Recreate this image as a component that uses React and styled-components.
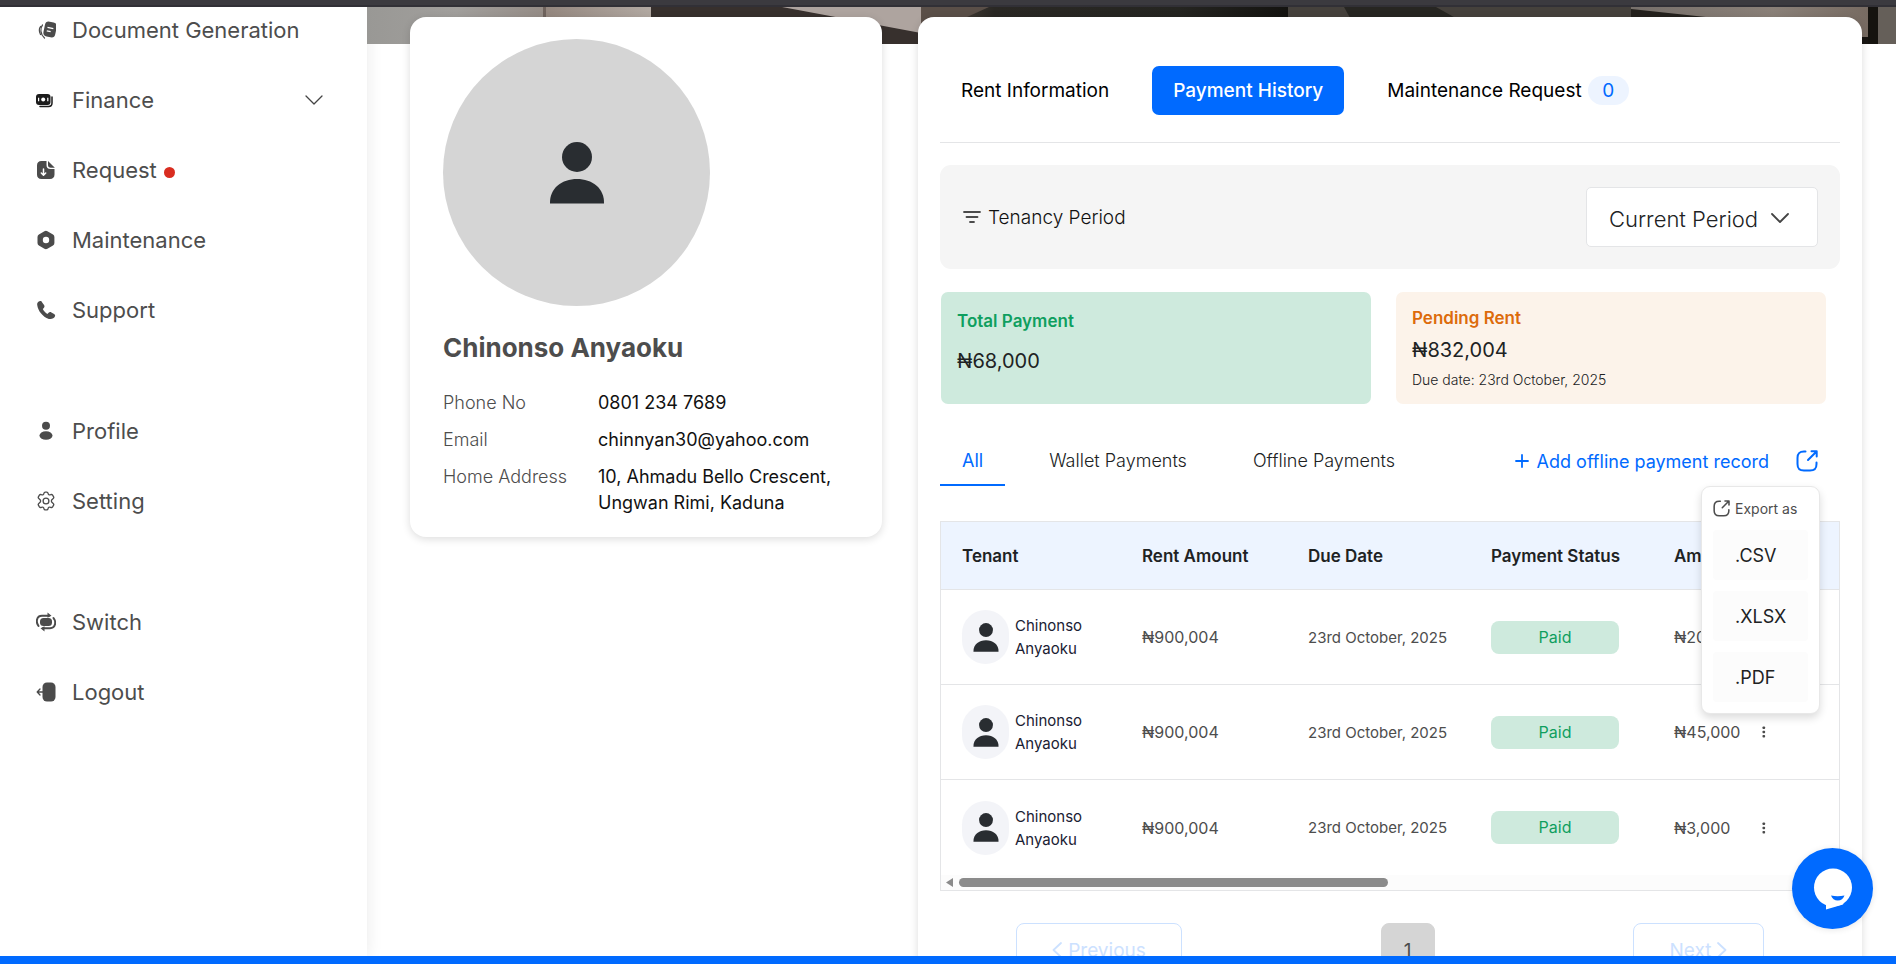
import React, { useState } from 'react';
import styled, { createGlobalStyle } from 'styled-components';

const primaryColor = '#006aff';
const primaryLight = '#edf4ff';
const successColor = '#0f9f5f';
const successLight = '#ceeadd';
const warningColor = '#dd6b0b';
const warningLight = '#fcf3ea';
const darkText = '#202223';
const greyText = '#4d4d4d';
const borderColor = '#e4e5e7';

const GlobalStyle = createGlobalStyle`
  * {
    box-sizing: border-box;
  }

  body {
    margin: 0;
    background: #fff;
    color: ${darkText};
    font-family: Inter, 'Open Sans', sans-serif;
    font-size: 18px;
    overflow: hidden;
  }

  button, select {
    font-family: inherit;
    border: none;
    background: none;
    padding: 0;
    margin: 0;
    color: inherit;
    cursor: pointer;
  }

  h1, p, dl, dd, ul {
    margin: 0;
    padding: 0;
  }

  svg {
    display: block;
    flex: none;
  }
`;

const Page = styled.div`
  display: flex;
  flex-direction: column;
  height: 100vh;
`;

const TopBar = styled.div`
  flex: none;
  height: 7px;
  background: #3b3a3f;
  border-bottom: 2px solid #313036;
`;

const BottomBar = styled.div`
  flex: none;
  height: 8px;
  background: ${primaryColor};
`;

const Body = styled.div`
  display: flex;
  flex: 1;
  min-height: 0;
  overflow: hidden;
`;

const Sidebar = styled.nav`
  display: flex;
  flex-direction: column;
  flex: none;
  gap: 75px;
  width: 367px;
  background: #fff;
  box-shadow: 0 0 16px rgba(0, 0, 0, 0.09);
`;

const NavGroup = styled.ul`
  display: flex;
  flex-direction: column;
  gap: 24px;
  list-style: none;
`;

const NavLink = styled.a`
  display: flex;
  align-items: center;
  height: 46px;
  padding: 0 44px 0 36px;
  color: ${greyText};
  font-size: 22px;
  text-decoration: none;

  > svg:first-child {
    margin-right: 16px;
  }

  > svg:last-child:not(:first-child) {
    margin-left: auto;
  }
`;

const RedDot = styled.span`
  width: 11px;
  height: 11px;
  margin: 4px 0 0 7px;
  border-radius: 50%;
  background: #d92d20;
`;

const Main = styled.main`
  flex: 1;
  min-width: 0;
`;

const BannerArt = styled.svg`
  width: 100%;
  height: 37px;
`;

const Columns = styled.div`
  position: relative;
  display: grid;
  grid-template-columns: 1fr 2fr;
  align-items: start;
  gap: 36px;
  margin-top: -27px;
  padding: 0 34px 0 43px;
`;

const Card = styled.section`
  min-width: 0;
  background: #fff;
  border-radius: 16px;
  box-shadow: 0 2px 8px rgba(0, 0, 0, 0.14);
`;

const ProfileCard = styled(Card)`
  padding: 22px 33px 21px;
`;

const Photo = styled.div`
  display: flex;
  align-items: center;
  justify-content: center;
  width: 267px;
  height: 267px;
  border-radius: 50%;
  background: #d5d5d5;
`;

const Name = styled.h1`
  margin: 24px 0;
  color: ${greyText};
  font-size: 26px;
  line-height: 36px;
  font-weight: 700;
`;

const Details = styled.dl`
  display: grid;
  grid-template-columns: 155px 1fr;
  row-gap: 11px;
  line-height: 26px;

  dt {
    color: ${greyText};
    font-weight: 300;
  }

  dd {
    color: #111;
  }
`;

const Panel = styled(Card)`
  padding: 22px;
`;

const Tabs = styled.div`
  display: flex;
  gap: 22px;
  padding: 27px 0;
  border-bottom: 1px solid ${borderColor};
`;

const Tab = styled.button`
  display: flex;
  align-items: center;
  gap: 6px;
  height: 49px;
  padding: 0 21px;
  border-radius: 7px;
  font-size: 19px;
  white-space: nowrap;
  font-weight: ${(p) => (p.$active ? 500 : 400)};
  background: ${(p) => (p.$active ? primaryColor : 'transparent')};
  color: ${(p) => (p.$active ? '#fff' : '#000')};
`;

const Count = styled.span`
  width: 41px;
  border-radius: 15px;
  background: ${primaryLight};
  color: ${primaryColor};
  line-height: 29px;
`;

const FilterBar = styled.div`
  display: flex;
  align-items: center;
  justify-content: space-between;
  margin-top: 22px;
  padding: 22px;
  border-radius: 11px;
  background: #f5f5f5;
`;

const FilterLabel = styled.label`
  display: flex;
  align-items: center;
  gap: 6px;
  color: #111;
  font-size: 19px;
  font-weight: 300;
`;

const SelectBox = styled.div`
  position: relative;

  svg {
    position: absolute;
    top: 26px;
    right: 29px;
    pointer-events: none;
  }
`;

const PeriodSelect = styled.select`
  width: 232px;
  height: 60px;
  padding: 4px 22px 0;
  border: 1px solid ${borderColor};
  border-radius: 5px;
  background: #fff;
  color: ${darkText};
  font-size: 22px;
  font-weight: 300;
  appearance: none;
`;

const Summary = styled.div`
  display: grid;
  grid-template-columns: 1fr 1fr;
  gap: 25px;
  margin-top: 23px;
  padding: 0 14px 0 1px;
`;

const SummaryCard = styled.div`
  display: flex;
  flex-direction: column;
  gap: ${(p) => (p.$roomy ? 16 : 8)}px;
  height: 112px;
  padding: ${(p) => (p.$roomy ? 17 : 14)}px 16px;
  border-radius: 7px;
  background: ${(p) => p.$background};
  line-height: 24px;
`;

const SummaryTitle = styled.p`
  color: ${(p) => p.$color};
  font-size: 17px;
  font-weight: 600;
`;

const SummaryAmount = styled.p`
  font-size: 20px;
`;

const SummaryNote = styled.p`
  font-size: 14px;
  font-weight: 300;
  line-height: 20px;
`;

const PaymentsBar = styled.div`
  display: flex;
  gap: 22px;
  height: 50px;
  margin-top: 32px;
`;

const PaymentTab = styled.button`
  padding: 0 22px;
  border-bottom: 2px solid ${(p) => (p.$active ? primaryColor : 'transparent')};
  color: ${(p) => (p.$active ? primaryColor : darkText)};
  font-size: 18px;
  font-weight: ${(p) => (p.$active ? 400 : 300)};
  white-space: nowrap;
`;

const AddButton = styled.button`
  display: flex;
  align-items: center;
  gap: 8px;
  margin-left: auto;
  color: ${primaryColor};
  font-size: 18px;
  white-space: nowrap;
`;

const ExportWrap = styled.div`
  position: relative;
  display: flex;
  align-items: center;
  margin: 0 22px 0 5px;
  color: ${primaryColor};
`;

const ExportMenu = styled.div`
  position: absolute;
  top: 100%;
  right: -2px;
  z-index: 2;
  display: flex;
  flex-direction: column;
  gap: 11px;
  width: 119px;
  padding: 11px;
  border: 1px solid #e8e8e8;
  border-radius: 9px;
  background: #fff;
  box-shadow: 0 4px 8px rgba(0, 0, 0, 0.14);
`;

const MenuTitle = styled.div`
  display: flex;
  align-items: center;
  gap: 5px;
  height: 21px;
  color: ${greyText};
  font-size: 14px;
  white-space: nowrap;
`;

const MenuItem = styled.button`
  height: 50px;
  padding-left: 22px;
  border-radius: 4px;
  background: #fcfcfc;
  color: ${darkText};
  font-size: 18px;
  text-align: left;
`;

const TableBox = styled.div`
  margin-top: 35px;
  border: 1px solid ${borderColor};
  overflow: hidden;
`;

const Table = styled.table`
  width: 100%;
  table-layout: fixed;
  border-spacing: 0;
`;

const HeadCell = styled.th`
  width: ${(p) => p.$width};
  height: 68px;
  padding: 0 0 0 21px;
  border-bottom: 1px solid ${borderColor};
  background: ${primaryLight};
  font-size: 17px;
  font-weight: 600;
  text-align: left;
  white-space: nowrap;
`;

const Cell = styled.td`
  height: 95px;
  padding: 0 0 0 21px;
  border-bottom: 1px solid ${borderColor};
  color: ${greyText};
  font-size: 15px;
  white-space: nowrap;

  tr:last-child > & {
    border-bottom: none;
  }
`;

const MoneyCell = styled(Cell)`
  font-size: 16px;
`;

const MoreCell = styled(Cell)`
  padding-left: 10px;
`;

const Tenant = styled.div`
  display: flex;
  align-items: center;
  gap: 6px;
  color: #1a2133;
  line-height: 23px;
  white-space: normal;
`;

const Avatar = styled.div`
  display: flex;
  align-items: center;
  justify-content: center;
  flex: none;
  width: 47px;
  height: 54px;
  border-radius: 24px;
  background: #f3f4f8;
`;

const Status = styled.span`
  display: block;
  width: 128px;
  border-radius: 8px;
  background: ${successLight};
  color: ${successColor};
  font-size: 16px;
  line-height: 33px;
  text-align: center;
`;

const MoreButton = styled.button`
  display: flex;
  align-items: center;
  justify-content: center;
  width: 22px;
  height: 22px;
`;

const ScrollTrack = styled.div`
  display: flex;
  align-items: center;
  gap: 6px;
  height: 15px;
  padding-left: 5px;
  background: #fcfcfc;
`;

const ScrollThumb = styled.div`
  width: 48%;
  height: 9px;
  border-radius: 5px;
  background: #8b8b8b;
`;

const Pagination = styled.div`
  display: flex;
  justify-content: space-between;
  margin-top: 32px;
  padding: 0 76px;
`;

const PageButton = styled.button`
  display: flex;
  align-items: center;
  justify-content: center;
  gap: 6px;
  width: ${(p) => p.$width};
  height: 54px;
  border: 1px solid #cce1ff;
  border-radius: 8px;
  color: #cce1ff;
  font-size: 19px;
`;

const CurrentPage = styled(PageButton)`
  border-color: #d5d5d5;
  background: #d5d5d5;
  color: ${greyText};
`;

const ChatButton = styled.button`
  position: fixed;
  right: 23px;
  bottom: 35px;
  z-index: 3;
  display: flex;
  align-items: center;
  justify-content: center;
  width: 81px;
  height: 81px;
  border-radius: 50%;
  background: ${primaryColor};
  box-shadow: 0 1px 6px rgba(0, 0, 0, 0.1);
`;

const SideIcon = ({ children }) => (
  <svg width="20" height="20" viewBox="0 0 20 20" fill="#4b4b4b" aria-hidden="true">
    {children}
  </svg>
);

const DocumentIcon = () => (
  <SideIcon>
    <g transform="rotate(12 14 10)">
      <rect x="8" y="2" width="12" height="15" rx="4" />
      <path d="M11 8h6M11 11.500h4" stroke="#fff" strokeWidth="1.400" fill="none" />
    </g>
    <path d="M6.500 5C4 8 4 14 8.500 18M4.500 6.500c-1.500 2-1.500 5 0 8" stroke="#4b4b4b" strokeWidth="1.200" fill="none" strokeLinecap="round" />
  </SideIcon>
);

const FinanceIcon = () => (
  <SideIcon>
    <rect x="0" y="4" width="14.500" height="11" rx="3" fill="#1c1c1c" />
    <path d="M16 7v6c0 2.500-1.200 3.500-3.500 3.500H4" stroke="#1c1c1c" strokeWidth="1.500" fill="none" strokeLinecap="round" />
    <circle cx="7.200" cy="9.500" r="2" fill="#fff" />
    <path d="M2.600 7.700v3.600M11.800 7.700v3.600" stroke="#fff" strokeWidth="1.200" />
  </SideIcon>
);

const RequestIcon = () => (
  <SideIcon>
    <path d="M10.500 1H5.500C2.500 1 1 2.700 1 5.500v9C1 17.300 2.500 19 5.500 19h8.500c2.800 0 4.500-1.700 4.500-4.500V9h-4C11.800 9 10.500 7.500 10.500 5z" />
    <path d="M12 1v4c0 1.800 1 2.800 2.800 2.800h4z" />
    <path d="M7.500 9v6M5.300 13l2.200 2.200L9.700 13" stroke="#fff" strokeWidth="1.500" fill="none" strokeLinecap="round" strokeLinejoin="round" />
  </SideIcon>
);

const MaintenanceIcon = () => (
  <SideIcon>
    <path fillRule="evenodd" d="M8.400 1.200a3 3 0 0 1 3 0l5.600 3.200a3 3 0 0 1 1.400 2.500v6.200a3 3 0 0 1-1.400 2.500l-5.600 3.200a3 3 0 0 1-3 0L2.900 15.600a3 3 0 0 1-1.400-2.500V6.900a3 3 0 0 1 1.400-2.500zM10 6.800a3.200 3.200 0 1 0 0 6.400 3.200 3.200 0 0 0 0-6.400z" />
  </SideIcon>
);

const SupportIcon = () => (
  <SideIcon>
    <path d="M3.500 1.200C1.700 1.700.9 3.200 1.200 5c.8 5.800 5.300 11.800 11.600 13.900 2.600.6 5.300-.2 6.200-2.600.4-1-.1-1.700-.9-2.200l-2.700-1.600c-1-.6-2-.5-2.800.3l-1.200 1.100c-1.900-1.200-3.600-3-4.600-5l1-1c.8-.8.9-1.600.4-2.600L6.200 2.400c-.5-1-1.500-1.500-2.700-1.200z" />
  </SideIcon>
);

const ProfileIcon = () => (
  <SideIcon>
    <circle cx="10" cy="4.800" r="4" />
    <ellipse cx="10" cy="14.500" rx="6.500" ry="4.300" />
  </SideIcon>
);

const SettingIcon = () => (
  <SideIcon>
    <g fill="none" stroke="#4b4b4b" strokeWidth="1.300" strokeLinejoin="round">
      <path d="M8 2.200Q8.200 1.200 9.200 1.200h1.600Q11.800 1.200 12 2.200q.4 2.300 2.600 1.500 1.300-.6 2 .4l1 1.700q.5 1-.4 1.700-1.900 1.500-1.900 2.500t1.900 2.500q.9.700.4 1.700l-1 1.700q-.7 1-2 .4-2.200-.8-2.600 1.500-.2 1-1.200 1H9.200q-1 0-1.200-1-.4-2.300-2.600-1.500-1.300.6-2-.4l-1-1.700q-.5-1 .4-1.700Q4.700 11 4.700 10T2.800 7.500q-.9-.7-.4-1.700l1-1.700q.7-1 2-.4Q7.600 4.500 8 2.200z" />
      <circle cx="10" cy="10" r="2.900" />
    </g>
  </SideIcon>
);

const SwitchIcon = () => (
  <SideIcon>
    <rect x="4" y="6" width="12" height="8" rx="3.500" />
    <g fill="none" stroke="#4b4b4b" strokeWidth="2" strokeLinecap="round">
      <path d="M2.500 14C-.5 10 .5 3.800 6 3.800h7" />
      <path d="M17.500 6c3 4 2 10.200-3.500 10.200H7" />
    </g>
    <path d="M11.500.500l4 3.300-4 2zM8.500 19.500l-4-3.300 4-2z" />
  </SideIcon>
);

const LogoutIcon = () => (
  <SideIcon>
    <rect x="6.500" y="0.500" width="13" height="19" rx="4.500" />
    <path d="M7 10H1.800M4 7l-2.800 3L4 13" fill="none" stroke="#4b4b4b" strokeWidth="1.300" strokeLinecap="round" strokeLinejoin="round" />
  </SideIcon>
);

const Chevron = ({ width, height, thickness }) => (
  <svg width={width} height={height} viewBox="0 0 18 10" fill="none" stroke="#444" strokeWidth={thickness} strokeLinecap="round" strokeLinejoin="round" aria-hidden="true">
    <path d="M1 1l8 8 8-8" />
  </svg>
);

const PersonIcon = ({ width, height }) => (
  <svg width={width} height={height} viewBox="0 0 56 62" fill="#292d31" aria-hidden="true">
    <circle cx="28" cy="15" r="15" />
    <path d="M1 61.500C.5 46 13 37 28 37s27.500 9 27 24.500z" />
  </svg>
);

const FilterIcon = () => (
  <svg width="20" height="14" viewBox="0 0 20 14" stroke="#4b4b4b" strokeWidth="1.800" strokeLinecap="round" aria-hidden="true">
    <path d="M2 2h16M4.500 7h11M8 12h4" />
  </svg>
);

const PlusIcon = () => (
  <svg width="14" height="14" viewBox="0 0 14 14" stroke="currentColor" strokeWidth="1.800" strokeLinecap="round" aria-hidden="true">
    <path d="M7 1v12M1 7h12" />
  </svg>
);

const ExportIcon = ({ size }) => (
  <svg width={size} height={size} viewBox="0 0 22 22" fill="none" stroke="currentColor" strokeWidth="2" strokeLinecap="round" strokeLinejoin="round" aria-hidden="true">
    <path d="M9.500 1.500H8C3.300 1.500 1.500 3.300 1.500 8v6c0 4.700 1.800 6.500 6.500 6.500h6c4.700 0 6.500-1.800 6.500-6.500v-1.500" />
    <path d="M12 10l8.300-8.300M15.500 1.300h5.200v5.200" />
  </svg>
);

const MoreIcon = () => (
  <svg width="4" height="12" viewBox="0 0 4 12" fill="#4b4b4b" aria-hidden="true">
    <rect x="0.500" y="0.500" width="2.600" height="2.600" rx="0.800" />
    <rect x="0.500" y="4.700" width="2.600" height="2.600" rx="0.800" />
    <rect x="0.500" y="8.900" width="2.600" height="2.600" rx="0.800" />
  </svg>
);

const PageArrow = ({ direction }) => (
  <svg width="10" height="16" viewBox="0 0 10 16" fill="none" stroke="currentColor" strokeWidth="1.800" strokeLinecap="round" strokeLinejoin="round" aria-hidden="true">
    <path d={direction === 'left' ? 'M9 1L1.500 8 9 15' : 'M1 1l7.500 7L1 15'} />
  </svg>
);

const ChatIcon = () => (
  <svg width="40" height="42" viewBox="0 0 40 42" aria-hidden="true">
    <circle cx="20" cy="19.500" r="19" fill="#fff" />
    <path d="M13 35v6.500l17-5 3-7z" fill="#fff" />
    <path d="M18 27.500q6.500 1.500 13.500 0c-1 3-3.500 5-6.700 5s-5.800-2-6.800-5z" fill={primaryColor} />
  </svg>
);

const Banner = () => (
  <BannerArt viewBox="0 0 1529 37" preserveAspectRatio="none" aria-hidden="true">
    <defs>
      <linearGradient id="wall">
        <stop offset="0" stopColor="#999895" />
        <stop offset="0.500" stopColor="#a19f9c" />
        <stop offset="1" stopColor="#958c86" />
      </linearGradient>
      <linearGradient id="pillar">
        <stop offset="0" stopColor="#94877f" />
        <stop offset="1" stopColor="#b2a9a2" />
      </linearGradient>
      <linearGradient id="shade">
        <stop offset="0" stopColor="#5c5048" />
        <stop offset="0.200" stopColor="#2a2824" />
        <stop offset="0.700" stopColor="#252521" />
        <stop offset="1" stopColor="#141310" />
      </linearGradient>
      <linearGradient id="lamp">
        <stop offset="0" stopColor="#77706b" />
        <stop offset="0.600" stopColor="#8a8078" />
        <stop offset="1" stopColor="#776b62" />
      </linearGradient>
    </defs>
    <rect width="178" height="37" fill="url(#wall)" />
    <rect x="176" width="3" height="37" fill="#6f635d" />
    <rect x="179" width="106" height="37" fill="url(#pillar)" />
    <rect x="284" width="270" height="37" fill="#37302d" />
    <path d="M415 0h139v26z" fill="#aea49f" />
    <rect x="554" width="367" height="37" fill="url(#shade)" />
    <path d="M555 0h67l-22 10-45 20z" fill="#5a4f48" />
    <rect x="921" width="343" height="37" fill="#45413c" />
    <path d="M977 0h92l32 18H987z" fill="#272622" />
    <rect x="1264" width="237" height="37" fill="url(#lamp)" />
    <path d="M1264 2l84 9v26h-84z" fill="#23201c" />
    <rect x="1495" y="30" width="8" height="7" fill="#181512" />
    <rect x="1501" width="10" height="37" fill="#15130f" />
    <rect x="1511" width="18" height="37" fill="#655f59" />
  </BannerArt>
);

const navGroups = [
  [
    { label: 'Document Generation', icon: <DocumentIcon /> },
    { label: 'Finance', icon: <FinanceIcon />, expandable: true },
    { label: 'Request', icon: <RequestIcon />, dot: true },
    { label: 'Maintenance', icon: <MaintenanceIcon /> },
    { label: 'Support', icon: <SupportIcon /> },
  ],
  [
    { label: 'Profile', icon: <ProfileIcon /> },
    { label: 'Setting', icon: <SettingIcon /> },
  ],
  [
    { label: 'Switch', icon: <SwitchIcon /> },
    { label: 'Logout', icon: <LogoutIcon /> },
  ],
];

const tabs = ['Rent Information', 'Payment History', 'Maintenance Request'];
const paymentTabs = ['All', 'Wallet Payments', 'Offline Payments'];
const exportFormats = ['.CSV', '.XLSX', '.PDF'];

const payments = [
  { id: 1, tenant: 'Chinonso Anyaoku', rent: '₦900,004', due: '23rd October, 2025', status: 'Paid', amount: '₦20,000' },
  { id: 2, tenant: 'Chinonso Anyaoku', rent: '₦900,004', due: '23rd October, 2025', status: 'Paid', amount: '₦45,000' },
  { id: 3, tenant: 'Chinonso Anyaoku', rent: '₦900,004', due: '23rd October, 2025', status: 'Paid', amount: '₦3,000' },
];

const App = () => {
  const [tab, setTab] = useState('Payment History');
  const [paymentTab, setPaymentTab] = useState('All');
  const [exportOpen, setExportOpen] = useState(true);

  return (
    <Page>
      <GlobalStyle />
      <TopBar />
      <Body>
        <Sidebar>
          {navGroups.map((group) => (
            <NavGroup key={group[0].label}>
              {group.map((item) => (
                <li key={item.label}>
                  <NavLink href="#">
                    {item.icon}
                    {item.label}
                    {item.dot && <RedDot />}
                    {item.expandable && <Chevron width={18} height={10} thickness={1.3} />}
                  </NavLink>
                </li>
              ))}
            </NavGroup>
          ))}
        </Sidebar>

        <Main>
          <Banner />
          <Columns>
            <ProfileCard>
              <Photo>
                <PersonIcon width={56} height={62} />
              </Photo>
              <Name>Chinonso Anyaoku</Name>
              <Details>
                <dt>Phone No</dt>
                <dd>0801 234 7689</dd>
                <dt>Email</dt>
                <dd>chinnyan30@yahoo.com</dd>
                <dt>Home Address</dt>
                <dd>10, Ahmadu Bello Crescent, Ungwan Rimi, Kaduna</dd>
              </Details>
            </ProfileCard>

            <Panel>
              <Tabs>
                {tabs.map((name) => (
                  <Tab key={name} $active={tab === name} onClick={() => setTab(name)}>
                    {name}
                    {name === 'Maintenance Request' && <Count>0</Count>}
                  </Tab>
                ))}
              </Tabs>

              <FilterBar>
                <FilterLabel htmlFor="period">
                  <FilterIcon />
                  Tenancy Period
                </FilterLabel>
                <SelectBox>
                  <PeriodSelect id="period">
                    <option>Current Period</option>
                  </PeriodSelect>
                  <Chevron width={18} height={10} thickness={1.8} />
                </SelectBox>
              </FilterBar>

              <Summary>
                <SummaryCard $background={successLight} $roomy>
                  <SummaryTitle $color={successColor}>Total Payment</SummaryTitle>
                  <SummaryAmount>₦68,000</SummaryAmount>
                </SummaryCard>
                <SummaryCard $background={warningLight}>
                  <SummaryTitle $color={warningColor}>Pending Rent</SummaryTitle>
                  <SummaryAmount>₦832,004</SummaryAmount>
                  <SummaryNote>Due date: 23rd October, 2025</SummaryNote>
                </SummaryCard>
              </Summary>

              <PaymentsBar>
                {paymentTabs.map((name) => (
                  <PaymentTab key={name} $active={paymentTab === name} onClick={() => setPaymentTab(name)}>
                    {name}
                  </PaymentTab>
                ))}
                <AddButton>
                  <PlusIcon />
                  Add offline payment record
                </AddButton>
                <ExportWrap>
                  <button aria-label="Export" onClick={() => setExportOpen(!exportOpen)}>
                    <ExportIcon size={22} />
                  </button>
                  {exportOpen && (
                    <ExportMenu>
                      <MenuTitle>
                        <ExportIcon size={17} />
                        Export as
                      </MenuTitle>
                      {exportFormats.map((format) => (
                        <MenuItem key={format}>{format}</MenuItem>
                      ))}
                    </ExportMenu>
                  )}
                </ExportWrap>
              </PaymentsBar>

              <TableBox>
                <Table>
                  <thead>
                    <tr>
                      <HeadCell $width="180px">Tenant</HeadCell>
                      <HeadCell $width="166px">Rent Amount</HeadCell>
                      <HeadCell $width="183px">Due Date</HeadCell>
                      <HeadCell $width="183px">Payment Status</HeadCell>
                      <HeadCell $width="90px">Amount</HeadCell>
                      <HeadCell $width="auto" aria-label="Actions" />
                    </tr>
                  </thead>
                  <tbody>
                    {payments.map((payment) => (
                      <tr key={payment.id}>
                        <Cell>
                          <Tenant>
                            <Avatar>
                              <PersonIcon width={26} height={29} />
                            </Avatar>
                            {payment.tenant}
                          </Tenant>
                        </Cell>
                        <MoneyCell>{payment.rent}</MoneyCell>
                        <Cell>{payment.due}</Cell>
                        <Cell>
                          <Status>{payment.status}</Status>
                        </Cell>
                        <MoneyCell>{payment.amount}</MoneyCell>
                        <MoreCell>
                          <MoreButton aria-label="More">
                            <MoreIcon />
                          </MoreButton>
                        </MoreCell>
                      </tr>
                    ))}
                  </tbody>
                </Table>
                <ScrollTrack>
                  <svg width="7" height="9" viewBox="0 0 7 9" fill="#8b8b8b" aria-hidden="true">
                    <path d="M7 0v9L0 4.500z" />
                  </svg>
                  <ScrollThumb />
                </ScrollTrack>
              </TableBox>

              <Pagination>
                <PageButton $width="166px">
                  <PageArrow direction="left" />
                  Previous
                </PageButton>
                <CurrentPage $width="54px">1</CurrentPage>
                <PageButton $width="131px">
                  Next
                  <PageArrow direction="right" />
                </PageButton>
              </Pagination>
            </Panel>
          </Columns>
        </Main>
      </Body>
      <BottomBar />
      <ChatButton aria-label="Chat">
        <ChatIcon />
      </ChatButton>
    </Page>
  );
};

export default App;
